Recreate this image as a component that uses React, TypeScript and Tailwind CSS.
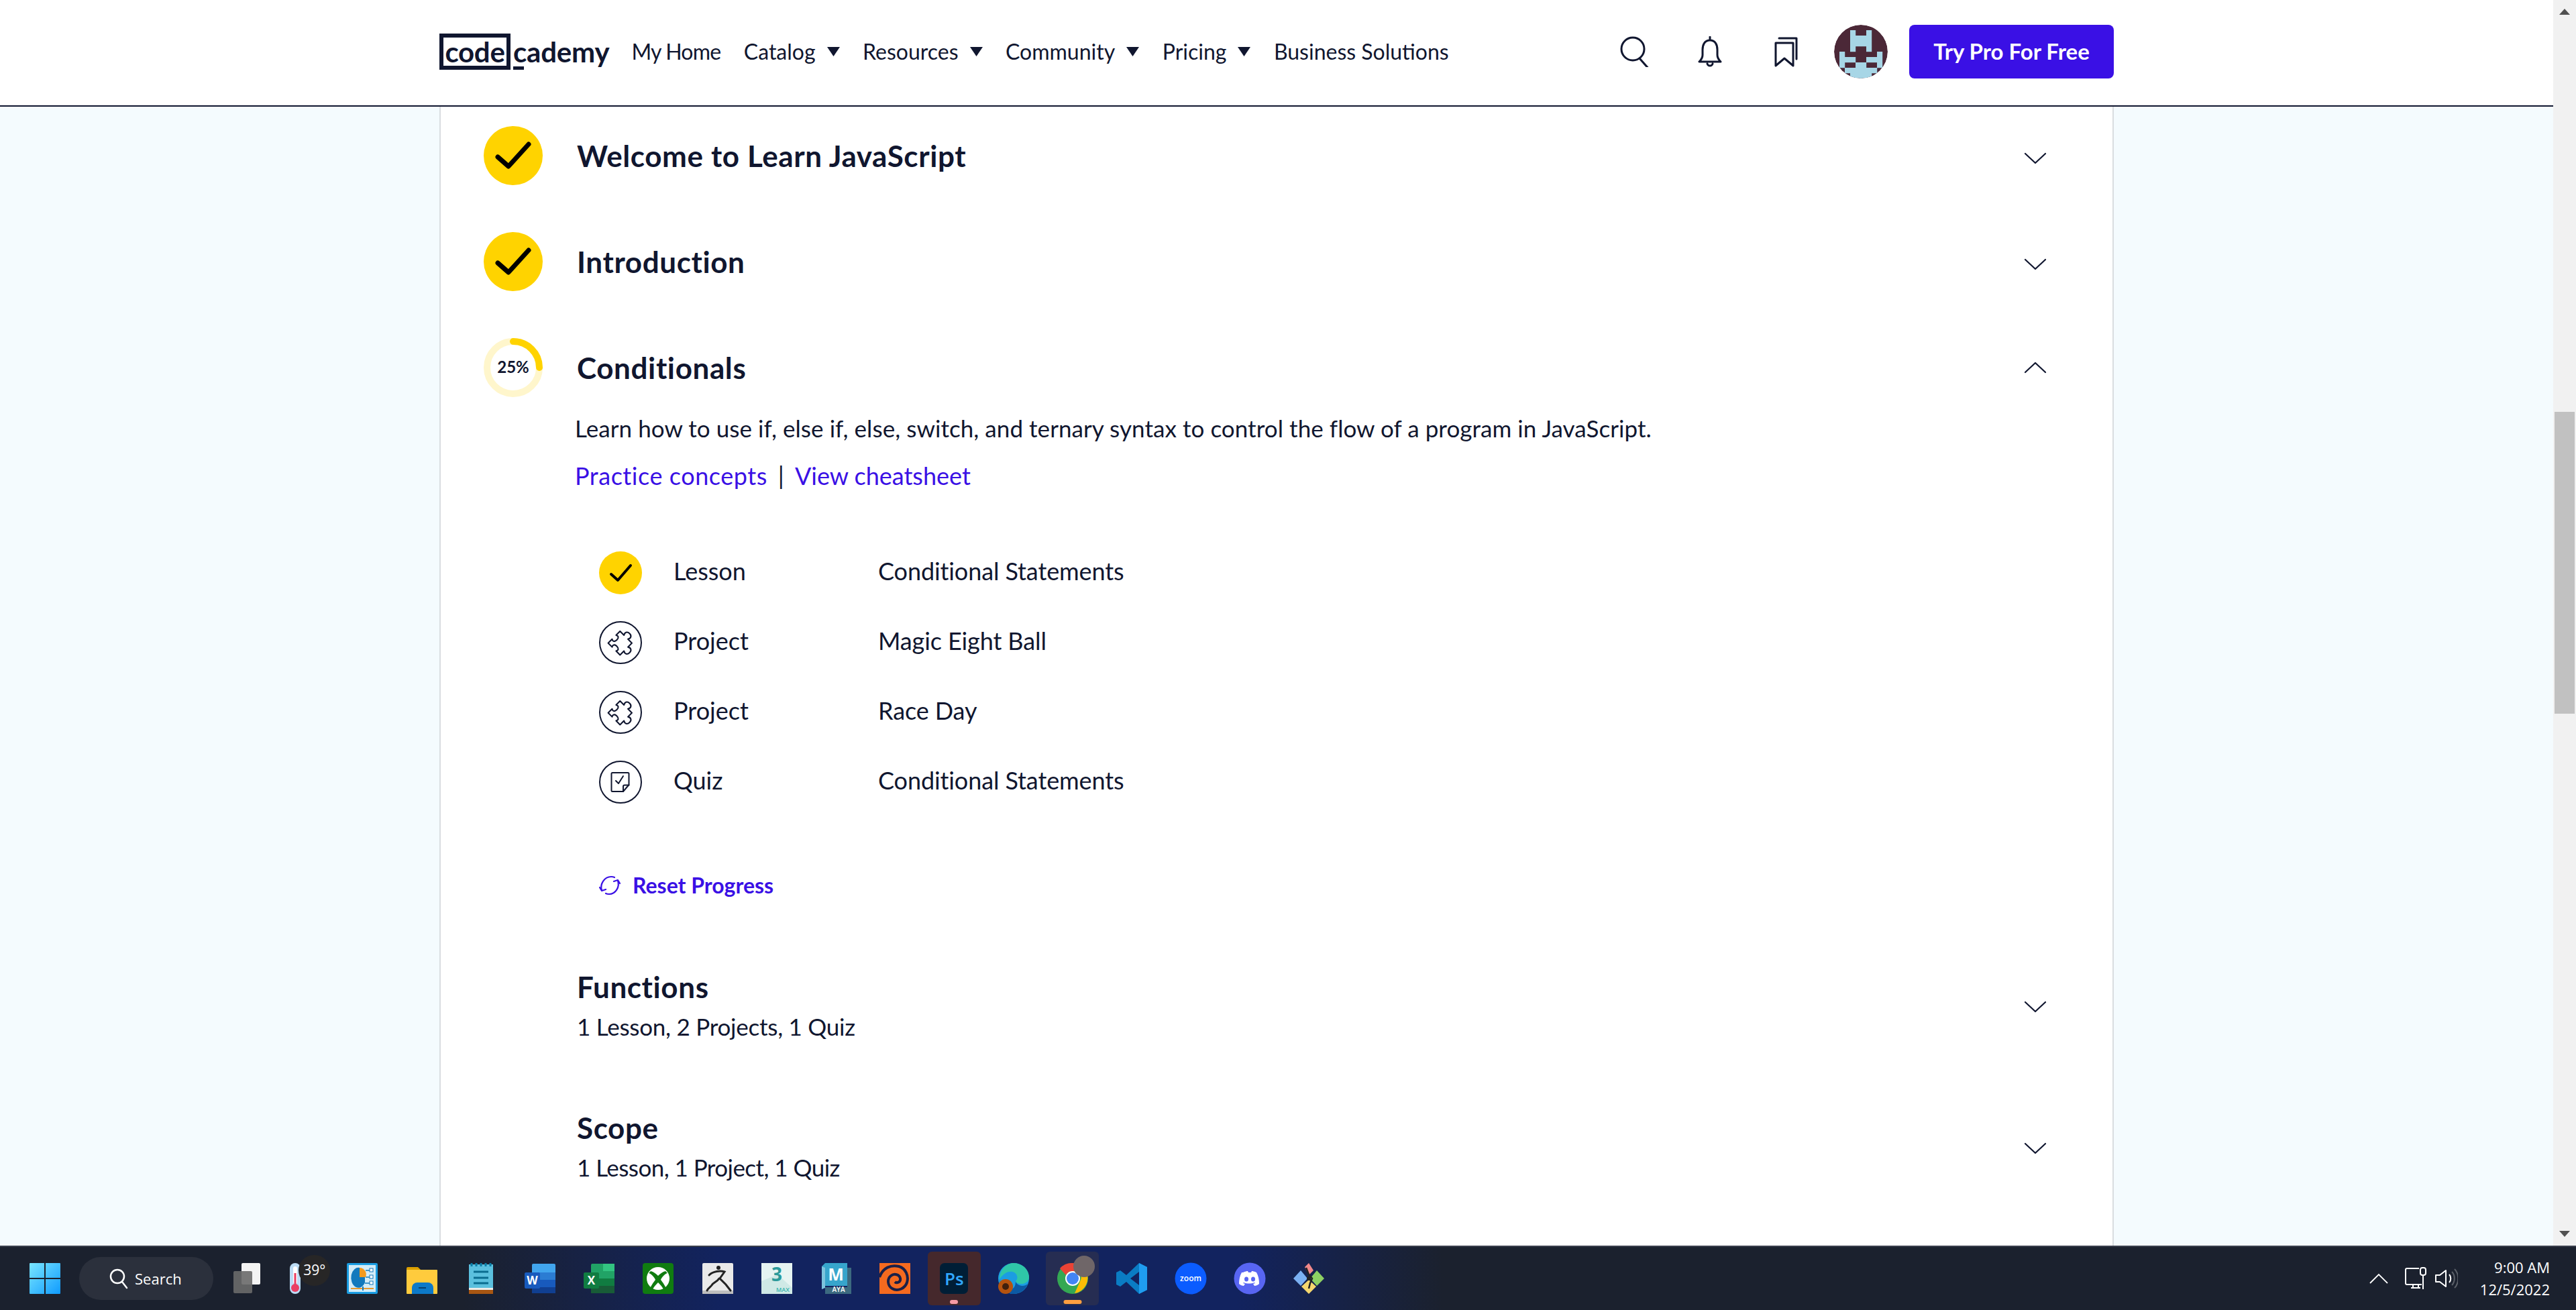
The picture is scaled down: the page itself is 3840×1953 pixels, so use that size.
import type { ReactNode } from 'react';

const navy = '#10162f';

function Chevron({ up = false, className = '' }: { up?: boolean; className?: string }) {
  return (
    <svg width="34" height="18" viewBox="0 0 34 18" fill="none" stroke={navy} strokeWidth="2.200" strokeLinecap="round" strokeLinejoin="round" className={`shrink-0 ${className}`}>
      <path d={up ? 'M2 16 17 2l15 14' : 'M2 2l15 14L32 2'} />
    </svg>
  );
}

function BigCheck() {
  return (
    <div className="flex h-[88px] w-[88px] shrink-0 items-center justify-center rounded-full bg-[#ffd300]">
      <svg width="88" height="88" viewBox="0 0 88 88" fill="none" stroke="#000" strokeWidth="7" strokeLinecap="round" strokeLinejoin="round">
        <path d="M21 46l16 14L67 27" />
      </svg>
    </div>
  );
}

function ProgressRing() {
  return (
    <div className="relative flex h-[88px] w-[88px] shrink-0 items-center justify-center">
      <svg width="88" height="88" viewBox="0 0 88 88" fill="none" className="absolute inset-0" strokeWidth="10">
        <circle cx="44" cy="44" r="39" stroke="#fff6cc" />
        <path d="M44 5a39 39 0 0 1 39 39" stroke="#ffd300" strokeLinecap="round" />
      </svg>
      <span className="-translate-y-[1px] text-[24px] font-bold text-[#10162f]">25%</span>
    </div>
  );
}

function Section({ icon, title, sub, subClass = '', up, chevronClass }: { icon?: ReactNode; title: string; sub?: string; subClass?: string; up?: boolean; chevronClass?: string }) {
  return (
    <div className="flex items-center">
      {icon ? <div className="mr-[51px]">{icon}</div> : <div className="w-[139px] shrink-0" />}
      <div className="flex-1">
        <div className="text-[44px] leading-[54px] font-bold tracking-[0.6px] text-[#10162f]">{title}</div>
        {sub && <div className={`mt-[7px] text-[35px] leading-[50px] text-[#10162f] ${subClass}`}>{sub}</div>}
      </div>
      <Chevron up={up} className={chevronClass} />
    </div>
  );
}

function PuzzleGlyph() {
  return (
    <svg width="50" height="50" viewBox="0 0 24 24" fill="none" stroke={navy} strokeWidth="1" strokeLinejoin="round" className="shrink-0">
      <path transform="rotate(45 12 12)" d="M6 6.500h4c-1.200-1.800-.4-3.700 2-3.700s3.200 1.900 2 3.700h4v4c1.800-1.200 3.700-.4 3.700 2s-1.900 3.200-3.700 2v4h-4c1-1.500.2-2.800-2-2.800s-3 1.300-2 2.800H6v-4c1.500 1 2.800.2 2.800-2s-1.300-3-2.800-2z" />
    </svg>
  );
}

function QuizGlyph() {
  return (
    <svg width="32" height="32" viewBox="0 0 32 32" fill="none" stroke={navy} strokeWidth="2" strokeLinejoin="round" strokeLinecap="round">
      <path d="M4 2h23a1.500 1.500 0 0 1 1.500 1.500V20L20 30H4a1.500 1.500 0 0 1-1.500-1.500v-25A1.500 1.500 0 0 1 4 2z" />
      <path d="M20 30v-7.500a2 2 0 0 1 2-2h6.500" />
      <path d="M9 14l4 4 7-11" />
    </svg>
  );
}

function LessonRow({ kind, label, name }: { kind: 'done' | 'project' | 'quiz'; label: string; name: string }) {
  return (
    <div className="flex h-[64px] items-center text-[36px] text-[#10162f]">
      {kind === 'done' ? (
        <div className="h-[64px] w-[64px] shrink-0 rounded-full bg-[#ffd300]">
          <svg width="64" height="64" viewBox="0 0 64 64" fill="none" stroke="#000" strokeWidth="4" strokeLinecap="round" strokeLinejoin="round">
            <path d="M18 34l10 9 19-22" />
          </svg>
        </div>
      ) : (
        <div className="flex h-[64px] w-[64px] shrink-0 items-center justify-center rounded-full border-2 border-[#10162f]">
          {kind === 'project' ? <PuzzleGlyph /> : <QuizGlyph />}
        </div>
      )}
      <div className="ml-[47px] w-[305px] -translate-y-[3px]">{label}</div>
      <div className="-translate-y-[3px] tracking-[-0.1px]">{name}</div>
    </div>
  );
}

function Avatar() {
  const rows = ['', '3,6', '3,4,5,6', '3,4,5,6', '3,6', '1,8', '1,2,3,6,7,8', '1,4,5,8', '2,3,4,5,6,7', '3,4,5,6'];
  return (
    <svg width="80" height="80" viewBox="0 0 80 80" className="rounded-full">
      <circle cx="40" cy="40" r="40" fill="#4b2837" />
      <clipPath id="av"><circle cx="40" cy="40" r="40" /></clipPath>
      <g clipPath="url(#av)" fill="#a7d6e6">
        {rows.map((r, y) =>
          r.split(',').filter(Boolean).map((c) => <rect key={y + '-' + c} x={Number(c) * 8} y={y * 8} width="8.2" height="8.2" />),
        )}
      </g>
    </svg>
  );
}

function Caret() {
  return (
    <svg width="19" height="14" viewBox="0 0 19 14" className="ml-[17px] shrink-0" fill={navy}>
      <path d="M0 0h19L9.500 14z" />
    </svg>
  );
}

function Header() {
  const nav: [string, boolean][] = [
    ['Catalog', true],
    ['Resources', true],
    ['Community', true],
    ['Pricing', true],
    ['Business Solutions', false],
  ];
  return (
    <header className="h-[159px] shrink-0 border-b-2 border-[#10162f] bg-white">
      <div className="mx-auto flex h-[157px] w-[2496px] items-center pb-[3px] text-[#10162f]">
        <div className="flex items-center">
          <div className="flex h-[54px] w-[106px] items-center justify-center border-[6px] border-[#10162f] text-[42px] leading-none font-bold tracking-[-0.3px]">code</div>
          <div className="relative ml-[4px] text-[42px] leading-[54px] font-bold tracking-[-0.2px]">
            cademy
            <span className="absolute bottom-0 left-0 h-[5px] w-[16px] bg-[#10162f]" />
          </div>
        </div>
        <nav className="ml-[33px] flex items-center gap-[34.500px] text-[32px]">
          <div className="tracking-[-0.8px]">My Home</div>
          {nav.map(([t, c]) => (
            <div key={t} className="flex items-center">
              {t}
              {c && <Caret />}
            </div>
          ))}
        </nav>
        <div className="ml-auto flex items-center">
          <svg width="46" height="46" viewBox="0 0 46 46" fill="none" stroke={navy} strokeWidth="3" strokeLinecap="round">
            <circle cx="19" cy="19" r="17" />
            <path d="M29 33l14 12" transform="rotate(8 29 33)" />
          </svg>
          <svg width="36" height="46" viewBox="0 0 36 46" fill="none" stroke={navy} strokeWidth="3" strokeLinecap="round" strokeLinejoin="round" className="ml-[70px]">
            <path d="M18 1v5M18 6C10 6 7 13 7 20v8c0 4-2 7-5 10h32c-3-3-5-6-5-10v-8c0-7-3-14-11-14zM14 41c1 4 7 4 8 0" />
          </svg>
          <svg width="36" height="46" viewBox="0 0 36 46" fill="none" stroke={navy} strokeWidth="3" strokeLinecap="round" strokeLinejoin="round" className="ml-[78px]">
            <path d="M2 10h26v34L15 33 2 44z" />
            <path d="M7 3h26v31" />
          </svg>
          <div className="ml-[53px]"><Avatar /></div>
          <div className="ml-[32px] flex h-[80px] w-[305px] items-center justify-center rounded-[8px] bg-[#3a10e5] text-[33px] font-bold text-white">Try Pro For Free</div>
        </div>
      </div>
    </header>
  );
}

function Tile({ children, size = 48 }: { children: ReactNode; size?: number }) {
  return (
    <div className="relative flex h-[80px] w-[88.2px] shrink-0 items-center justify-center">
      <svg width={size} height={size} viewBox="0 0 48 48">{children}</svg>
    </div>
  );
}

function TaskbarIcons() {
  return (
    <>
      <Tile>
        <rect x="20" y="1" width="28" height="32" rx="2" fill="#f4f4f4" />
        <rect x="8" y="13" width="28" height="33" rx="2" fill="#6a6a6a" fillOpacity=".9" />
      </Tile>
      <div className="relative flex h-[80px] w-[88.2px] shrink-0 items-center justify-center">
        <svg width="56" height="48" viewBox="0 0 56 48" className="translate-x-[5px]">
          <rect x="3" y="1" width="16" height="46" rx="8" fill="#bcdcf5" />
          <rect x="8" y="6" width="6" height="26" rx="3" fill="#fff" />
          <rect x="9.500" y="16" width="3" height="22" fill="#ea3f63" />
          <circle cx="11" cy="38" r="6" fill="#ea3f63" />
          <circle cx="35" cy="22" r="8" fill="#e8244f" />
        </svg>
        <div className="absolute top-[5px] left-[37px] flex h-[46px] w-[47px] items-center justify-center rounded-full bg-[#272626] text-[21px] whitespace-nowrap text-white [font-family:'Open_Sans',sans-serif]">39°</div>
      </div>
      <Tile>
        <rect x="1" y="1" width="46" height="46" rx="2" fill="#1b9de2" />
        <rect x="4" y="4" width="40" height="40" fill="#d3ecf8" />
        <path d="M20 8a11 15 0 1 0 8 22V16H20z" fill="#1279bd" />
        <path d="M20 8a10 10 0 0 1 9 14h-9z" fill="#f39a1e" />
        <path d="M29 12h8M29 22h8M28 31h9" stroke="#1279bd" strokeWidth="1.500" />
        <rect x="35" y="9" width="5" height="5" fill="#fff" stroke="#1279bd" />
        <rect x="35" y="19" width="5" height="5" fill="#fff" stroke="#1279bd" />
        <rect x="35" y="28" width="5" height="5" fill="#fff" stroke="#1279bd" />
        <path d="M7 39h34" stroke="#e79a2e" strokeWidth="2" />
        <rect x="24" y="36" width="2" height="6" fill="#1279bd" />
      </Tile>
      <Tile>
        <path d="M1 9a2 2 0 0 1 2-2h15l5 5h-22z" fill="#dca000" />
        <rect x="1" y="11" width="46" height="36" rx="1" fill="#ffcb3d" />
        <path d="M9 47V38a8 8 0 0 1 8-8h16a8 8 0 0 1 8 8v9z" fill="#0d79c8" />
        <rect x="19" y="37" width="11" height="2" fill="#063f6e" />
      </Tile>
      <Tile>
        <rect x="6" y="3" width="36" height="42" fill="#5bc0de" />
        <rect x="6" y="39" width="36" height="8" fill="#a85612" />
        <rect x="6" y="38" width="36" height="3" fill="#ecebe8" />
        <path d="M10 1v5M17 1v5M24 1v5M31 1v5M38 1v5" stroke="#0a7fa7" strokeWidth="3" />
        <path d="M13 14h22M13 23h22M13 31h22" stroke="#0a6c8f" strokeWidth="3" />
      </Tile>
      <Tile>
        <rect x="12" y="2" width="35" height="44" rx="2" fill="#41a5ee" />
        <rect x="12" y="15" width="35" height="11" fill="#2b7cd3" />
        <rect x="12" y="26" width="35" height="11" fill="#185abd" />
        <rect x="12" y="37" width="35" height="9" fill="#103f91" />
        <rect x="1" y="15" width="23" height="24" rx="2" fill="#185abd" />
        <text x="12.500" y="33" textAnchor="middle" fontSize="17" fontWeight="700" fill="#fff" fontFamily="Open Sans">W</text>
      </Tile>
      <Tile>
        <rect x="12" y="2" width="35" height="44" rx="2" fill="#21a366" />
        <rect x="30" y="2" width="17" height="11" fill="#33c481" />
        <rect x="12" y="24" width="35" height="11" fill="#107c41" />
        <rect x="12" y="35" width="35" height="11" fill="#185c37" />
        <rect x="1" y="15" width="23" height="24" rx="2" fill="#107c41" />
        <text x="12.500" y="33" textAnchor="middle" fontSize="17" fontWeight="700" fill="#fff" fontFamily="Open Sans">X</text>
      </Tile>
      <Tile>
        <rect x="1" y="1" width="46" height="46" rx="4" fill="#107c10" />
        <circle cx="24" cy="24" r="17" fill="#fff" />
        <path d="M24 20c-3-3-7-6-11-7l-3 3c4 1 9 7 10 10-3 4-7 9-8 14l3 2c2-5 6-9 9-12 3 3 7 7 9 12l3-2c-1-5-5-10-8-14 1-3 6-9 10-10l-3-3c-4 1-8 4-11 7z" fill="#107c10" />
      </Tile>
      <Tile>
        <rect x="1" y="1" width="46" height="46" rx="2" fill="#e9e9e9" />
        <rect x="1" y="42" width="46" height="5" fill="#bdbdbd" />
        <circle cx="25" cy="8" r="3" fill="#222" />
        <path d="M11 19c6-6 17-7 23-5l-7 10 9 9 7 9M26 24c-3 5-9 6-11 10-2 3-5 4-7 8" fill="none" stroke="#222" strokeWidth="3" strokeLinecap="round" />
      </Tile>
      <Tile>
        <rect x="1" y="1" width="46" height="46" fill="#e6f4f2" />
        <path d="M1 28l24-10 22 20v9H1z" fill="#cfe9e6" />
        <text x="24" y="28" textAnchor="middle" fontSize="28" fontWeight="700" fill="#2b9a9a" fontFamily="Open Sans">3</text>
        <text x="33" y="44" textAnchor="middle" fontSize="9" fontWeight="600" fill="#35b3ad" fontFamily="Open Sans">MAX</text>
      </Tile>
      <Tile>
        <path d="M3 6l5-5h33v34H8l-5 5z" fill="#37a5cc" />
        <path d="M3 6l5 2v30l-5 2z" fill="#7cc4dd" />
        <path d="M41 8l6 0v39H8v-10h33z" fill="#3c6a80" />
        <text x="24" y="27" textAnchor="middle" fontSize="25" fontWeight="700" fill="#fff" fontFamily="Open Sans">M</text>
        <text x="28" y="44" textAnchor="middle" fontSize="10" fontWeight="600" fill="#fff" fontFamily="Open Sans">AYA</text>
      </Tile>
      <Tile>
        <rect x="1" y="1" width="46" height="46" fill="#f56a1f" />
        <path d="M1 22C6 8 18 3 30 6c10 3 15 14 12 24-3 9-14 14-22 9-7-4-8-14-2-19 5-4 13-2 14 4 1 5-5 8-8 5" fill="none" stroke="#1a2048" strokeWidth="4" />
      </Tile>
      <div className="relative mx-[4.6px] flex h-[80px] w-[79px] shrink-0 items-center justify-center rounded-[6px] bg-[#45282c]">
        <div className="flex h-[46px] w-[42px] items-center justify-center rounded-[7px] bg-[#001e36] text-[26px] font-semibold text-[#31a8ff] [font-family:'Open_Sans',sans-serif]">Ps</div>
        <div className="absolute bottom-[2px] left-1/2 h-[6px] w-[12px] -translate-x-1/2 rounded-full bg-[#f79aa5]" />
      </div>
      <div className="relative flex h-[80px] w-[88.2px] shrink-0 items-center justify-center">
        <svg width="48" height="48" viewBox="0 0 48 48">
          <circle cx="24" cy="24" r="23" fill="#1b9de2" />
          <path d="M3 25C3 11 13 1 24 1c13 0 23 10 23 21 0 6-5 10-11 10-5 0-9-2-9-4 2-2 3-4 2-8-2-7-15-11-26 5z" fill="#2fc6a8" />
          <path d="M27 28c0 3 5 7 10 7 3 0 6-1 8-3-3 9-11 15-21 15C12 47 3 37 3 25c1 10 10 15 16 15 5 0 8-4 8-12z" fill="#0c59a4" />
          <circle cx="12" cy="36" r="11" fill="#b5530f" />
          <circle cx="12" cy="36" r="5" fill="#40200d" />
        </svg>
      </div>
      <div className="relative mx-[4.6px] flex h-[80px] w-[79px] shrink-0 items-center justify-center rounded-[6px] bg-[#262d52]">
        <svg width="48" height="48" viewBox="0 0 48 48">
          <circle cx="24" cy="24" r="23" fill="#34a853" />
          <path d="M24 1a23 23 0 0 1 20 12H24a11 11 0 0 0-10 6L5 9A23 23 0 0 1 24 1z" fill="#ea4335" />
          <path d="M44 13a23 23 0 0 1-17 33l9-20a11 11 0 0 0-4-13z" fill="#fbbc05" />
          <circle cx="24" cy="24" r="11" fill="#fff" />
          <circle cx="24" cy="24" r="9" fill="#4285f4" />
        </svg>
        <div className="absolute top-[6px] left-[41px] h-[32px] w-[32px] rounded-full bg-[#6f6668]" />
        <div className="absolute bottom-[2px] left-1/2 h-[6px] w-[27px] -translate-x-1/2 rounded-full bg-[#ff9f40]" />
      </div>
      <Tile>
        <path d="M35 1l12 6v34l-12 6-19-18-9 7-6-3V15l6-3 9 7zM35 14l-13 10 13 10z" fill="#0a7cc4" />
        <path d="M35 1l12 6v34l-12 6z" fill="#1f9cf0" />
      </Tile>
      <Tile>
        <circle cx="24" cy="24" r="23.500" fill="#0b5cff" />
        <text x="24" y="28" textAnchor="middle" fontSize="12" fontWeight="600" fill="#fff" fontFamily="Open Sans">zoom</text>
      </Tile>
      <Tile>
        <circle cx="24" cy="24" r="23.500" fill="#5865f2" />
        <path d="M14 15c3-1.500 6-2 7-2l1 2h4l1-2c1 0 4 .5 7 2 3 5 4 11 4 17-2 2-5 3-7 3l-2-3 3-1-1-1c-5 2-11 2-16 0l-1 1 3 1-2 3c-2 0-5-1-7-3 0-6 1-12 4-17z" fill="#fff" />
        <ellipse cx="19" cy="25" rx="3" ry="3.500" fill="#5865f2" />
        <ellipse cx="29" cy="25" rx="3" ry="3.500" fill="#5865f2" />
      </Tile>
      <Tile>
        <path d="M24 1l-6 6 6 12 7-7z" fill="#f1888a" />
        <path d="M1 24l11-12 10 12-10 11z" fill="#7ab0f2" />
        <path d="M47 24L36 12 26 24l10 11z" fill="#8ed163" />
        <path d="M24 47l-11-11 11-10 11 10z" fill="#f5d76e" />
        <path d="M20 8l4 10 5 6-3 7-2 8" fill="none" stroke="#222" strokeWidth="2.500" />
        <circle cx="24" cy="24" r="3" fill="#222" />
      </Tile>
    </>
  );
}

function Taskbar() {
  return (
    <div className="flex h-[96px] shrink-0 items-center border-t-2 border-[#3a3f4c] bg-[linear-gradient(90deg,#1b212e_0%,#1b212e_18%,#12235f_28%,#12235f_48%,#1b212e_56%,#1b212e_100%)] text-white">
      <svg width="46" height="46" viewBox="0 0 46 46" className="ml-[44px] shrink-0">
        <defs>
          <linearGradient id="win" x1="0" y1="0" x2="1" y2="1">
            <stop offset="0" stopColor="#7ae6ff" />
            <stop offset="1" stopColor="#0f9bff" />
          </linearGradient>
        </defs>
        <path d="M1 0h21v22H0V1a1 1 0 0 1 1-1zM24 0h21a1 1 0 0 1 1 1v21H24zM0 24h22v22H1a1 1 0 0 1-1-1zM24 24h22v21a1 1 0 0 1-1 1H24z" fill="url(#win)" />
      </svg>
      <div className="ml-[28px] flex h-[64px] w-[200px] shrink-0 items-center rounded-full bg-[#2b303c] pl-[45px] text-[22px] text-white [font-family:'Open_Sans',sans-serif]">
        <svg width="28" height="32" viewBox="0 0 28 32" fill="none" stroke="#fff" strokeWidth="2.500" strokeLinecap="round" className="shrink-0">
          <circle cx="12" cy="13" r="10" />
          <path d="M19 21l7 9" />
        </svg>
        <span className="ml-[10px]">Search</span>
      </div>
      <div className="ml-[2px] flex items-center">
        <TaskbarIcons />
      </div>
      <div className="ml-auto flex items-center">
        <svg width="28" height="16" viewBox="0 0 28 16" fill="none" stroke="#fff" strokeWidth="1.800">
          <path d="M1 15L14 2l13 13" />
        </svg>
        <svg width="34" height="34" viewBox="0 0 34 34" fill="none" stroke="#fff" strokeWidth="2" strokeLinejoin="round" className="ml-[24px]">
          <path d="M22 2H4a2 2 0 0 0-2 2v20a2 2 0 0 0 2 2h22M10 31h14M13 26v5M21 26v5" />
          <rect x="24" y="1" width="8" height="11" rx="3" />
          <path d="M28 12v21" />
        </svg>
        <svg width="34" height="30" viewBox="0 0 34 30" fill="none" strokeWidth="2" className="ml-[12px]">
          <path d="M1 10h6l9-7v24l-9-7H1z" stroke="#fff" strokeLinejoin="round" />
          <path d="M21 9c3 3 3 9 0 12" stroke="#fff" />
          <path d="M25 5c5 5 5 15 0 20M29 1c7 7 7 21 0 28" stroke="#5b6068" />
        </svg>
        <div className="mr-[39px] ml-[33px] text-right text-[22px] leading-[33px] text-white [font-family:'Open_Sans',sans-serif]">
          <div>9:00 AM</div>
          <div>12/5/2022</div>
        </div>
      </div>
    </div>
  );
}

export default function App() {
  return (
    <div className="flex h-[1953px] w-[3840px] flex-col overflow-hidden bg-[#f4fbfe] [font-family:Lato,sans-serif]">
      <div className="flex min-h-0 flex-1">
        <div className="flex min-w-0 flex-1 flex-col">
          <Header />
          <main className="mx-auto min-h-0 w-[2496px] flex-1 overflow-hidden border-x-2 border-[#d9dde0] bg-white pt-[29px] pr-[98px] pl-[64px]">
            <Section icon={<BigCheck />} title="Welcome to Learn JavaScript" chevronClass="mt-[8px]" />
            <div className="mt-[70px]"><Section icon={<BigCheck />} title="Introduction" chevronClass="mt-[8px]" /></div>
            <div className="mt-[70px]"><Section icon={<ProgressRing />} title="Conditionals" up /></div>
            <div className="pl-[136px]">
              <p className="mt-[19px] text-[35px] leading-[54px] tracking-[0.06px] text-[#10162f]">Learn how to use if, else if, else, switch, and ternary syntax to control the flow of a program in JavaScript.</p>
              <div className="mt-[17px] flex items-center text-[36px] leading-[54px] text-[#3a10e5]">
                <span className="tracking-[0.55px]">Practice concepts</span>
                <span className="mx-[16px] text-[#10162f]">|</span>
                <span>View cheatsheet</span>
              </div>
            </div>
            <div className="mt-[86px] flex flex-col gap-[40px] pl-[172px]">
              <LessonRow kind="done" label="Lesson" name="Conditional Statements" />
              <LessonRow kind="project" label="Project" name="Magic Eight Ball" />
              <LessonRow kind="project" label="Project" name="Race Day" />
              <LessonRow kind="quiz" label="Quiz" name="Conditional Statements" />
            </div>
            <div className="mt-[102px] flex h-[40px] items-center pl-[172px] text-[32px] font-bold text-[#3a10e5]">
              <svg width="32" height="30" viewBox="0 0 32 30" fill="none" stroke="#3a10e5" strokeWidth="2.200" strokeLinecap="round" strokeLinejoin="round" className="shrink-0">
                <path d="M4 22C1 13 8 2 18 2c2 0 4 .5 5 1M28 8c3 9-3 20-13 20-2 0-4-.5-5-1" />
                <path d="M1 18l3 5 6-2M31 12l-3-5-6 2" />
              </svg>
              <span className="ml-[18px]">Reset Progress</span>
            </div>
            <div className="mt-[104px]"><Section title="Functions" sub="1 Lesson, 2 Projects, 1 Quiz" subClass="tracking-[-0.25px]" chevronClass="mt-[2px]" /></div>
            <div className="mt-[99px]"><Section title="Scope" sub="1 Lesson, 1 Project, 1 Quiz" subClass="tracking-[-0.55px]" chevronClass="mt-[4px]" /></div>
          </main>
        </div>
        <div className="flex w-[34px] shrink-0 flex-col items-center bg-[#f1f1f1]">
          <svg width="16" height="9" viewBox="0 0 16 9" className="mt-[13px] shrink-0" fill="#505050"><path d="M8 0l8 9H0z" /></svg>
          <div className="mt-[592px] h-[450px] w-[30px] shrink-0 bg-[#c1c1c1]" />
          <svg width="16" height="9" viewBox="0 0 16 9" className="mt-auto mb-[13px] shrink-0" fill="#505050"><path d="M8 9L0 0h16z" /></svg>
        </div>
      </div>
      <Taskbar />
    </div>
  );
}
